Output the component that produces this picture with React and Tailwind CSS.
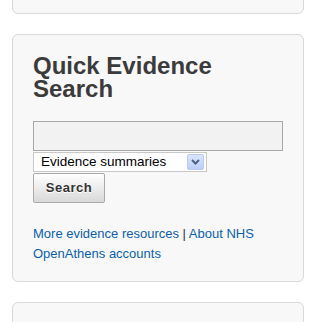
export default function App() {
  const font = { fontFamily: '"Liberation Sans", Arial, sans-serif' };
  return (
    <div className="w-[316px] h-[322px] overflow-hidden bg-white" style={font}>
      <div className="ml-[12px] w-[292px] -mt-[30px] h-[44px] rounded-[6px] border border-[#d9d9d9] bg-[#f8f8f8]" />
      <div className="ml-[12px] mt-[20px] w-[292px] rounded-[6px] border border-[#d9d9d9] bg-[#f8f8f8] pl-[20px] pr-[20px] pt-[19px] pb-[17px]">
        <h2 className="text-[24px] leading-[23px] font-bold text-[#3b3b3b]">
          Quick Evidence
          <br />
          Search
        </h2>
        <div className="mt-[21px] w-[250px] h-[30px] border border-[#a8a8a8] bg-[#f2f2f2]" />
        <div className="mt-[1px] w-[174px] h-[20px] border border-[#c8c8c8] bg-white flex items-center justify-between pl-[7px] pr-[2px]">
          <span className="text-[13.5px] leading-[16px] text-black">Evidence summaries</span>
          <span className="w-[17px] h-[16px] rounded-[2px] border border-[#b9cbf3] bg-gradient-to-b from-[#dbe6fd] to-[#bccefa] flex items-center justify-center">
            <svg width="9" height="6" viewBox="0 0 9 6">
              <path d="M1 1 L4.5 4.5 L8 1" stroke="#4d6185" strokeWidth="2" fill="none" />
            </svg>
          </span>
        </div>
        <button className="block mt-[1px] w-[72px] h-[30px] rounded-[2px] border border-[#aaaaaa] bg-gradient-to-b from-[#ffffff] to-[#d9d9d9] text-[13px] font-bold text-[#333] [text-shadow:0_1px_0_#fff] tracking-[0.5px]">
          Search
        </button>
        <p className="mt-[21px] text-[13px] leading-[20px] text-[#333]">
          <a className="text-[#0b5fad]">More evidence resources</a> | <a className="text-[#0b5fad]">About NHS OpenAthens accounts</a>
        </p>
      </div>
      <div className="ml-[12px] mt-[20px] w-[292px] h-[60px] rounded-[6px] border border-[#d9d9d9] bg-[#f8f8f8]" />
    </div>
  );
}
